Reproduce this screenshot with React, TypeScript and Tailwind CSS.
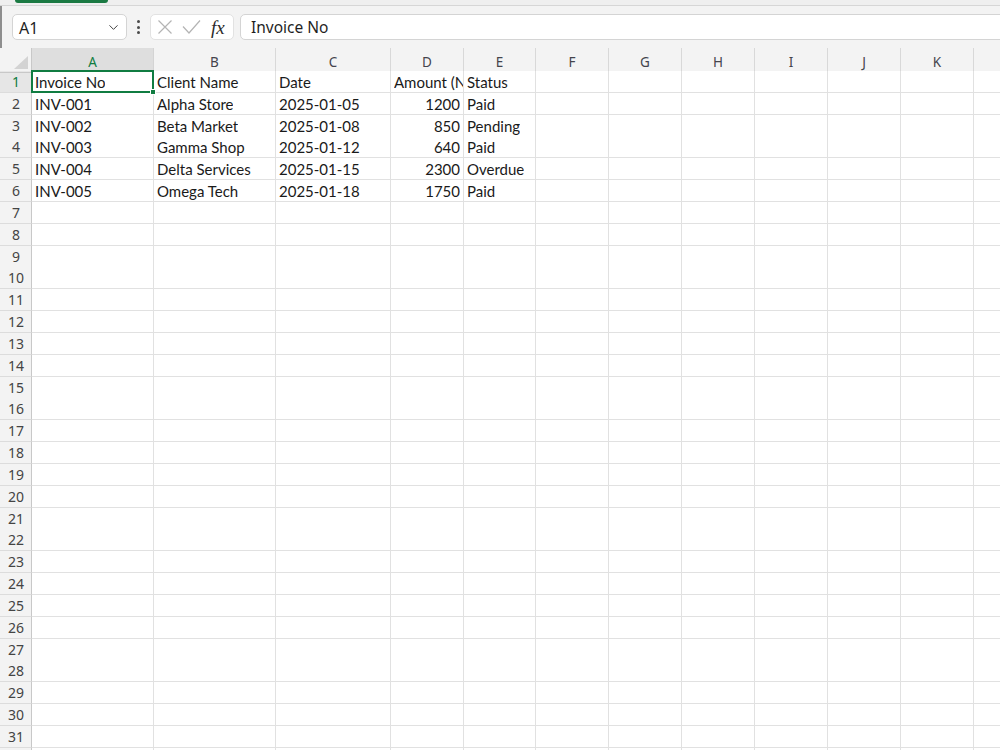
import { ChevronDown } from "lucide-react"

const columns = ["A", "B", "C", "D", "E", "F", "G", "H", "I", "J", "K", "L"]

const rows: string[][] = [
  ["Invoice No", "Client Name", "Date", "Amount (NGN)", "Status"],
  ["INV-001", "Alpha Store", "2025-01-05", "1200", "Paid"],
  ["INV-002", "Beta Market", "2025-01-08", "850", "Pending"],
  ["INV-003", "Gamma Shop", "2025-01-12", "640", "Paid"],
  ["INV-004", "Delta Services", "2025-01-15", "2300", "Overdue"],
  ["INV-005", "Omega Tech", "2025-01-18", "1750", "Paid"],
]

const gridCols =
  "grid grid-cols-[32px_122px_122px_115px_73px_72px_73px_73px_73px_73px_73px_73px_100px]"

function isNumber(value: string) {
  return /^\d+$/.test(value)
}

function FormulaBar() {
  return (
    <div className="flex h-[42px] items-start bg-[#f3f3f3] pt-[8px]">
      <div className="ml-[10px] flex h-[26px] w-[115px] items-center justify-between rounded-[5px] border border-[#d4d4d4] bg-white pl-[6px] pr-[5px]">
        <span className="pt-[2px] text-[16px] leading-none text-[#1f1f1f] [font-family:'Noto_Sans',sans-serif]">A1</span>
        <ChevronDown className="size-[15px] text-[#424242]" strokeWidth={1.6} aria-hidden="true" />
      </div>

      <div className="flex h-[26px] w-[23px] flex-col items-center justify-center gap-[2.5px]">
        <span className="size-[3px] rounded-full bg-[#4a4a4a]" />
        <span className="size-[3px] rounded-full bg-[#4a4a4a]" />
        <span className="size-[3px] rounded-full bg-[#4a4a4a]" />
      </div>

      <div className="flex h-[26px] w-[84px] items-center rounded-[5px] border border-[#e2e2e2] bg-white pl-[6px]">
        <svg width="16" height="16" viewBox="0 0 16 16" className="text-[#b4b4b4]" aria-hidden="true">
          <path d="M1.5 1.5 L14.5 14.5 M14.5 1.5 L1.5 14.5" stroke="currentColor" strokeWidth="1.2" fill="none" />
        </svg>
        <svg width="19" height="16" viewBox="0 0 19 16" className="ml-[9px] text-[#b4b4b4]" aria-hidden="true">
          <path d="M1 7.5 L7 14 L18 1.5" stroke="currentColor" strokeWidth="1.2" fill="none" />
        </svg>
        <span className="ml-[10px] text-[19px] italic leading-none text-[#2b2b2b] [font-family:'Liberation_Serif',serif]">
          fx
        </span>
      </div>

      <div className="ml-[6px] -mr-[12px] flex h-[26px] flex-1 items-center rounded-[5px] border border-[#d4d4d4] bg-white pl-[10px]">
        <span className="pt-[2px] text-[15.5px] leading-none text-[#1f1f1f] [font-family:'Noto_Sans',sans-serif]">
          Invoice No
        </span>
      </div>
    </div>
  )
}

function HeaderRow() {
  return (
    <div className={`${gridCols} h-[23px] bg-[#f3f3f3]`}>
      <div className="relative border-b border-r border-[#c8c8c8]">
        <svg width="14" height="13" viewBox="0 0 14 13" className="absolute bottom-[3px] right-[3px]" aria-hidden="true">
          <path d="M14 0 L14 13 L0 13 Z" fill="#d3d3d3" />
        </svg>
      </div>
      {columns.map((col, i) => (
        <div
          key={col}
          className={
            i === 0
              ? "flex items-center justify-center border-b border-r border-b-[#c8c8c8] border-r-[#d4d4d4] bg-[#dedede] pt-[4px] text-[13.5px] text-[#107c41] [font-family:'Noto_Sans',sans-serif]"
              : "flex items-center justify-center border-b border-r border-b-[#c8c8c8] border-r-[#d8d8d8] pt-[4px] text-[13.5px] text-[#44444c] [font-family:'Noto_Sans',sans-serif]"
          }
        >
          {col}
        </div>
      ))}
    </div>
  )
}

function Row({ index }: { index: number }) {
  const data = rows[index - 1] ?? []
  return (
    <div className={`${gridCols} h-[21.84px]`}>
      <div
        className={
          index === 1
            ? "flex items-center justify-center border-b border-r border-b-[#dcdcdc] border-r-[#c8c8c8] bg-[#e6e6e6] pl-[1px] text-[14px] text-[#107c41] [font-family:'Noto_Sans',sans-serif]"
            : "flex items-center justify-center border-b border-r border-b-[#dcdcdc] border-r-[#c8c8c8] bg-[#f3f3f3] pl-[1px] text-[14px] text-[#444444] [font-family:'Noto_Sans',sans-serif]"
        }
      >
        {index}
      </div>
      {columns.map((col, c) => {
        const value = data[c] ?? ""
        const numeric = isNumber(value)
        return (
          <div
            key={col}
            className={
              numeric
                ? "relative flex min-w-0 items-end justify-end whitespace-nowrap border-b border-r border-[#e1e1e1] bg-white pb-[1px] pr-[3px] text-[15px] leading-[18px] text-[#1a1a1a] [font-family:Lato,sans-serif]"
                : "relative flex min-w-0 items-end whitespace-nowrap border-b border-r border-[#e1e1e1] bg-white pb-[1px] pl-[3px] text-[15px] leading-[18px] text-[#1a1a1a] [font-family:Lato,sans-serif]"
            }
          >
            <span className="block min-w-0 overflow-hidden">{value}</span>
            {index === 1 && c === 0 ? (
              <div className="pointer-events-none absolute -left-[1px] -top-[1px] bottom-[-1px] right-[-1px] z-10 border-2 border-[#107c41]">
                <div className="absolute -bottom-[4px] -right-[4px] size-[6px] border border-white bg-[#107c41]" />
              </div>
            ) : null}
          </div>
        )
      })}
    </div>
  )
}

export default function App() {
  return (
    <main className="h-[750px] w-[1000px] overflow-hidden bg-[#f3f3f3]">
      <div className="h-[6px] border-b border-[#d6d6d6] bg-[#efefef]">
        <div className="ml-[15px] h-[3px] w-[93px] rounded-b-[3px] bg-[#1b7a43]" />
      </div>
      <div className="border-l-2 border-[#8e8e8e]">
        <FormulaBar />
        <div className="-ml-[2px] overflow-hidden">
          <HeaderRow />
          {Array.from({ length: 32 }, (_, i) => (
            <Row key={i} index={i + 1} />
          ))}
        </div>
      </div>
    </main>
  )
}
